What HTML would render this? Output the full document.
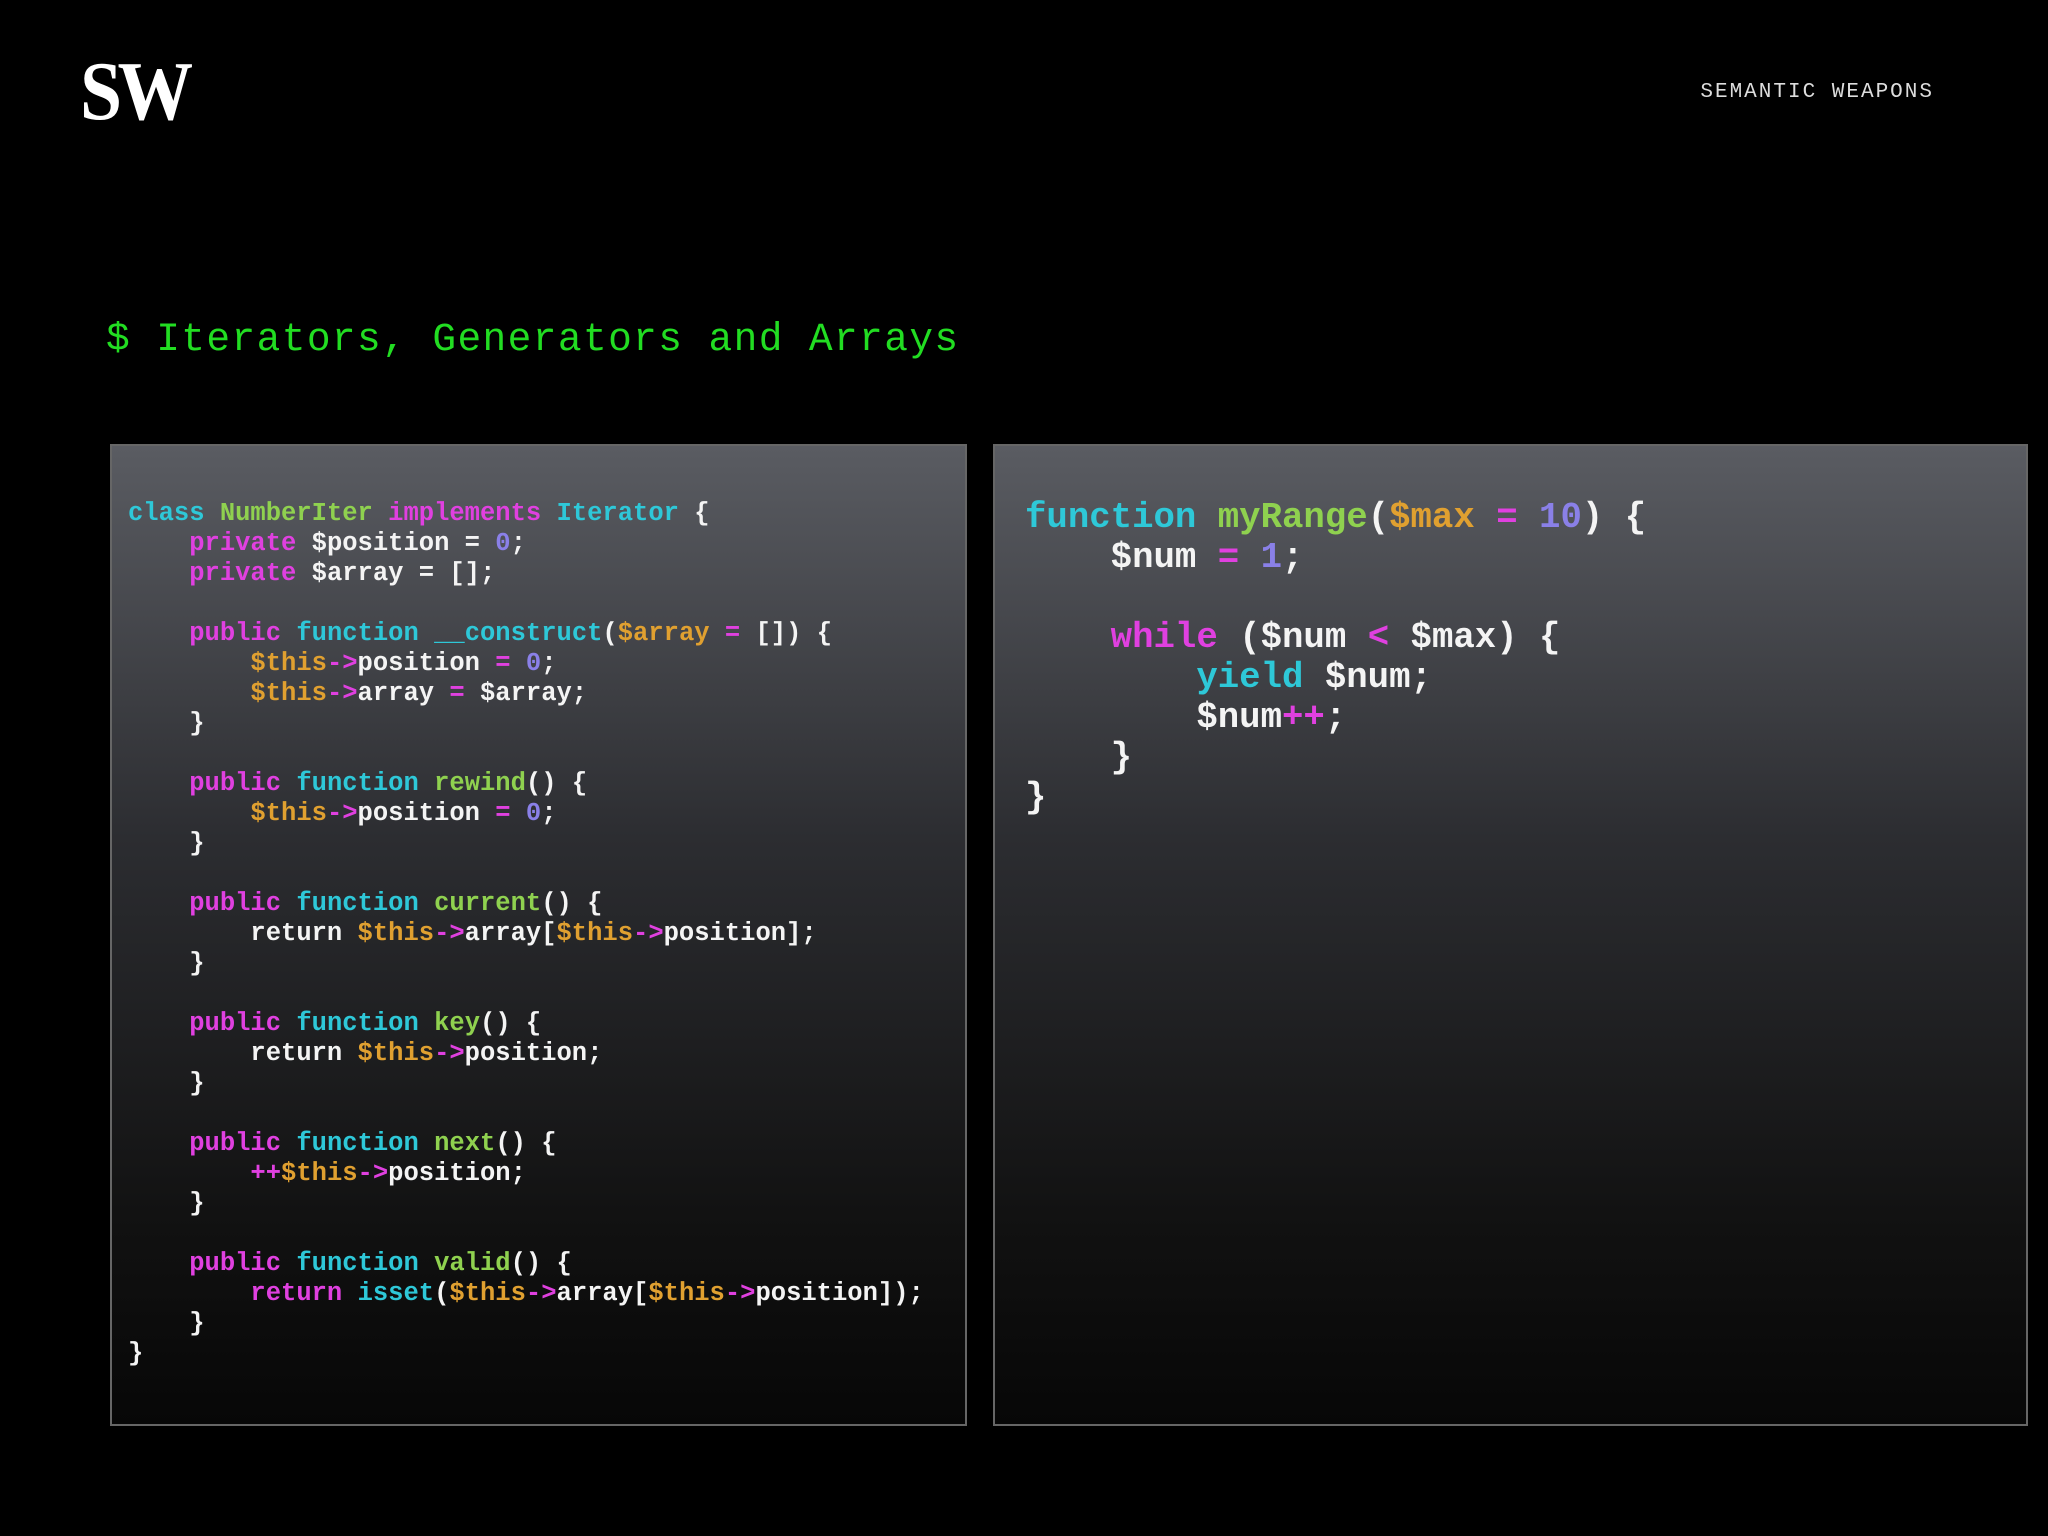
<!DOCTYPE html>
<html><head><meta charset="utf-8"><style>
html,body{margin:0;padding:0;background:#000;}
body{width:2048px;height:1536px;position:relative;overflow:hidden;font-family:"Liberation Sans",sans-serif;}
.logo{position:absolute;left:80px;top:50px;font-family:"Liberation Serif",serif;font-weight:bold;font-size:84px;color:#fff;letter-spacing:-5px;line-height:84px;transform:scaleX(0.9);transform-origin:left;}
.brand{position:absolute;right:114px;top:81px;color:#ddd;font-family:"Liberation Mono",monospace;font-size:21px;letter-spacing:2px;}
.title{position:absolute;left:106px;top:314px;color:#22dd22;font-family:"Liberation Mono",monospace;font-size:39.5px;letter-spacing:1.4px;line-height:52px;white-space:pre;}
.panel{position:absolute;top:444px;height:982px;box-sizing:border-box;border:2px solid #666;background:linear-gradient(#5a5c62 0%,#2c2d31 40%,#111 80%,#070707 100%);}
pre{margin:0;font-family:"Liberation Mono",monospace;font-weight:bold;color:#f4f4f4;position:absolute;}
.l{left:110px;width:857px;}
.l pre{left:16px;top:53px;font-size:25.5px;line-height:30px;}
.r{left:993px;width:1035px;}
.r pre{left:30px;top:52px;font-size:35.7px;line-height:40px;}
.c{color:#2ec8d8}.g{color:#8fd14f}.m{color:#e040e0}.o{color:#e0a030}.p{color:#8a80e8}
</style></head><body>
<div class="logo">SW</div>
<div class="brand">SEMANTIC WEAPONS</div>
<div class="title">$ Iterators, Generators and Arrays</div>
<div class="panel l"><pre><span class="c">class</span> <span class="g">NumberIter</span> <span class="m">implements</span> <span class="c">Iterator</span> {
    <span class="m">private</span> $position = <span class="p">0</span>;
    <span class="m">private</span> $array = [];

    <span class="m">public</span> <span class="c">function</span> <span class="c">__construct</span>(<span class="o">$array</span> <span class="m">=</span> []) {
        <span class="o">$this</span><span class="m">-&gt;</span>position <span class="m">=</span> <span class="p">0</span>;
        <span class="o">$this</span><span class="m">-&gt;</span>array <span class="m">=</span> $array;
    }

    <span class="m">public</span> <span class="c">function</span> <span class="g">rewind</span>() {
        <span class="o">$this</span><span class="m">-&gt;</span>position <span class="m">=</span> <span class="p">0</span>;
    }

    <span class="m">public</span> <span class="c">function</span> <span class="g">current</span>() {
        return <span class="o">$this</span><span class="m">-&gt;</span>array[<span class="o">$this</span><span class="m">-&gt;</span>position];
    }

    <span class="m">public</span> <span class="c">function</span> <span class="g">key</span>() {
        return <span class="o">$this</span><span class="m">-&gt;</span>position;
    }

    <span class="m">public</span> <span class="c">function</span> <span class="g">next</span>() {
        <span class="m">++</span><span class="o">$this</span><span class="m">-&gt;</span>position;
    }

    <span class="m">public</span> <span class="c">function</span> <span class="g">valid</span>() {
        <span class="m">return</span> <span class="c">isset</span>(<span class="o">$this</span><span class="m">-&gt;</span>array[<span class="o">$this</span><span class="m">-&gt;</span>position]);
    }
}</pre></div>
<div class="panel r"><pre><span class="c">function</span> <span class="g">myRange</span>(<span class="o">$max</span> <span class="m">=</span> <span class="p">10</span>) {
    $num <span class="m">=</span> <span class="p">1</span>;

    <span class="m">while</span> ($num <span class="m">&lt;</span> $max) {
        <span class="c">yield</span> $num;
        $num<span class="m">++</span>;
    }
}</pre></div>
</body></html>
